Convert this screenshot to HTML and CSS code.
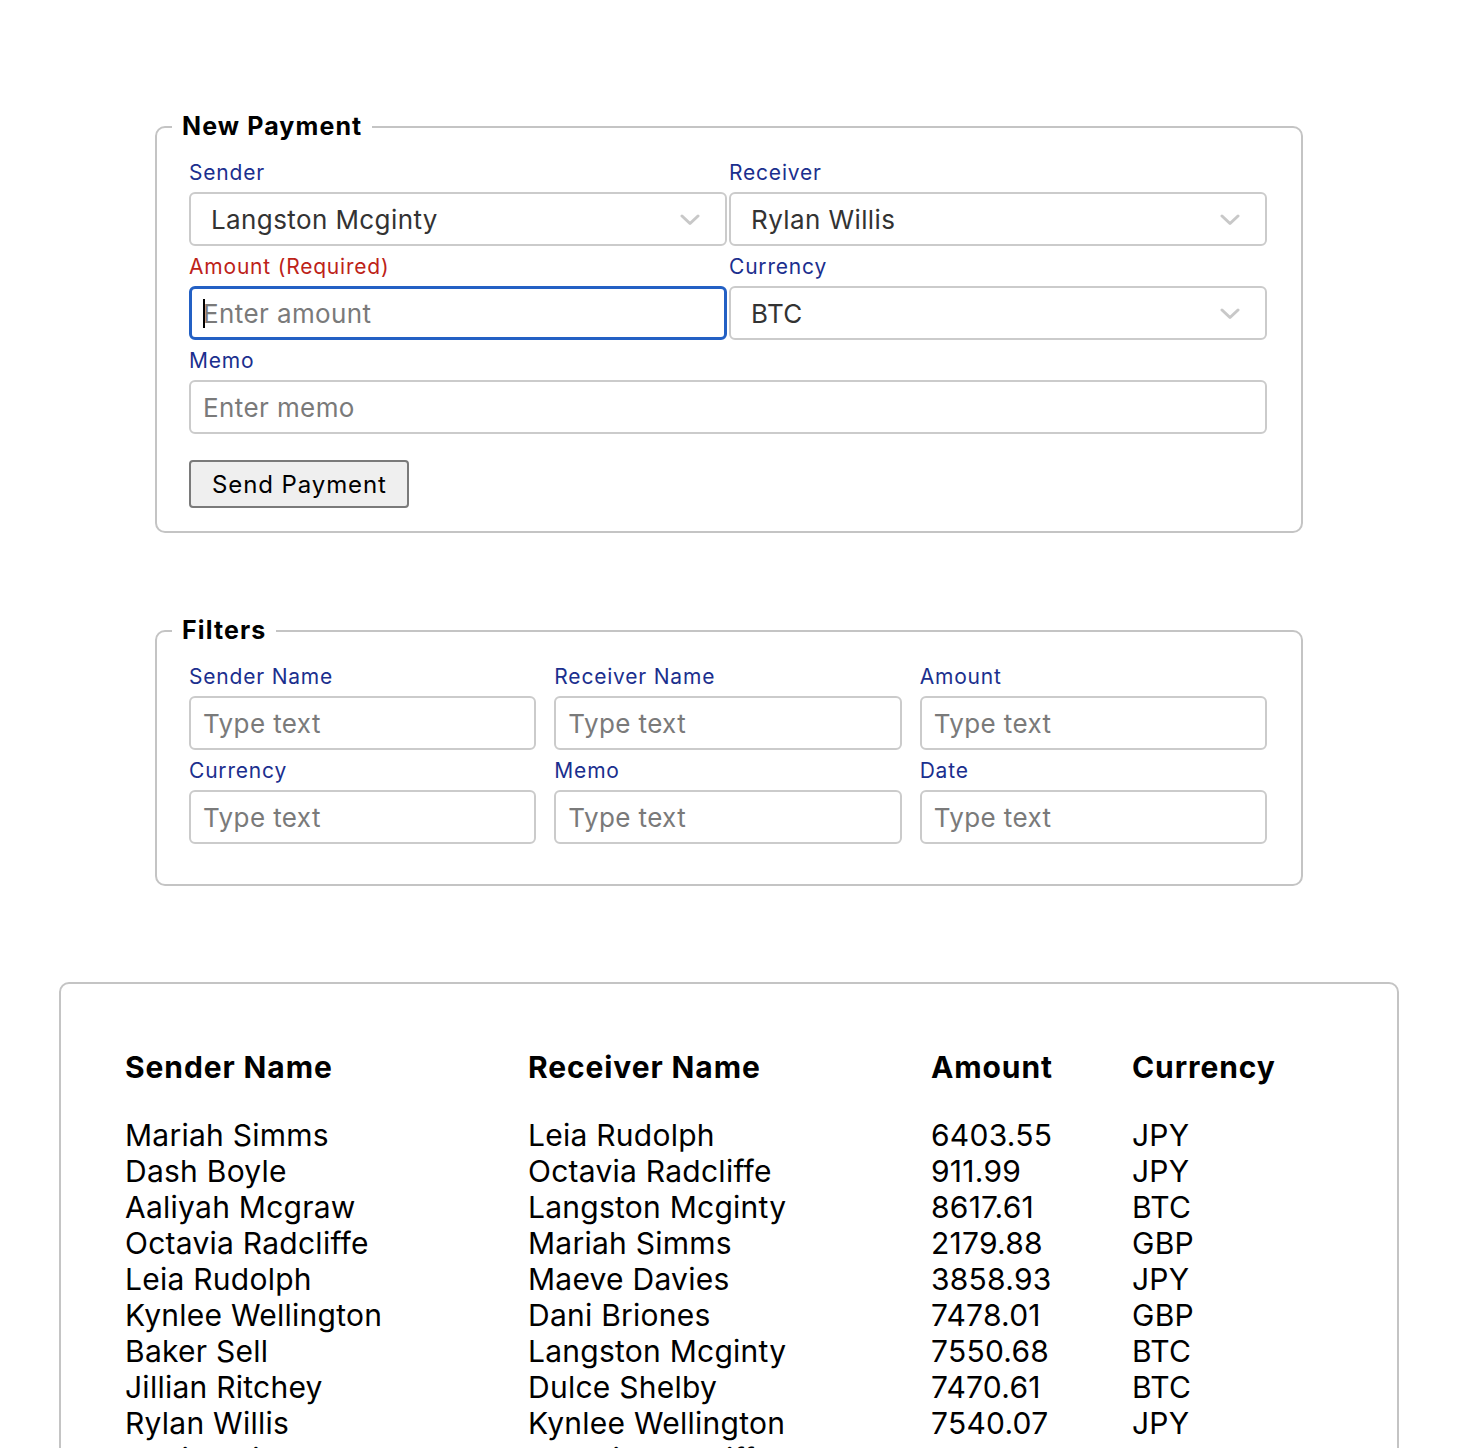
FILE: index.html
```html
<!DOCTYPE html>
<html lang="en">
<head>
<meta charset="utf-8">
<title>Payments</title>
<link rel="stylesheet" href="styles.css">
</head>
<body>
<main class="page">
  <fieldset class="panel panel-payment">
    <legend class="panel-title">New Payment</legend>
    <div class="grid grid-2">
      <div class="field">
        <label class="field-label">Sender</label>
        <div class="select-wrap">
          <select class="control select"><option>Langston Mcginty</option></select>
          <svg class="chevron" width="20" height="12" viewBox="0 0 20 12"><path d="M2 2 L10 9.5 L18 2" fill="none" stroke="#c8c8c8" stroke-width="3" stroke-linecap="round" stroke-linejoin="round"/></svg>
        </div>
      </div>
      <div class="field">
        <label class="field-label">Receiver</label>
        <div class="select-wrap">
          <select class="control select"><option>Rylan Willis</option></select>
          <svg class="chevron" width="20" height="12" viewBox="0 0 20 12"><path d="M2 2 L10 9.5 L18 2" fill="none" stroke="#c8c8c8" stroke-width="3" stroke-linecap="round" stroke-linejoin="round"/></svg>
        </div>
      </div>
      <div class="field">
        <label class="field-label field-label-error">Amount (Required)</label>
        <div class="input-wrap">
          <input class="control input input-focused" type="text" placeholder="Enter amount">
          <span class="caret"></span>
        </div>
      </div>
      <div class="field">
        <label class="field-label">Currency</label>
        <div class="select-wrap">
          <select class="control select"><option>BTC</option></select>
          <svg class="chevron" width="20" height="12" viewBox="0 0 20 12"><path d="M2 2 L10 9.5 L18 2" fill="none" stroke="#c8c8c8" stroke-width="3" stroke-linecap="round" stroke-linejoin="round"/></svg>
        </div>
      </div>
      <div class="field field-wide">
        <label class="field-label">Memo</label>
        <input class="control input" type="text" placeholder="Enter memo">
      </div>
    </div>
    <button class="btn" type="button">Send Payment</button>
  </fieldset>

  <fieldset class="panel panel-filters">
    <legend class="panel-title">Filters</legend>
    <div class="grid grid-3">
      <div class="field">
        <label class="field-label">Sender Name</label>
        <input class="control input" type="text" placeholder="Type text">
      </div>
      <div class="field">
        <label class="field-label">Receiver Name</label>
        <input class="control input" type="text" placeholder="Type text">
      </div>
      <div class="field">
        <label class="field-label">Amount</label>
        <input class="control input" type="text" placeholder="Type text">
      </div>
      <div class="field">
        <label class="field-label">Currency</label>
        <input class="control input" type="text" placeholder="Type text">
      </div>
      <div class="field">
        <label class="field-label">Memo</label>
        <input class="control input" type="text" placeholder="Type text">
      </div>
      <div class="field">
        <label class="field-label">Date</label>
        <input class="control input" type="text" placeholder="Type text">
      </div>
    </div>
  </fieldset>

  <section class="table-card">
    <table class="tx-table">
      <thead>
        <tr>
          <th class="col-wide">Sender Name</th>
          <th class="col-wide">Receiver Name</th>
          <th class="col-narrow">Amount</th>
          <th class="col-narrow">Currency</th>
        </tr>
      </thead>
      <tbody>
        <tr><td>Mariah Simms</td><td>Leia Rudolph</td><td>6403.55</td><td>JPY</td></tr>
        <tr><td>Dash Boyle</td><td>Octavia Radcliffe</td><td>911.99</td><td>JPY</td></tr>
        <tr><td>Aaliyah Mcgraw</td><td>Langston Mcginty</td><td>8617.61</td><td>BTC</td></tr>
        <tr><td>Octavia Radcliffe</td><td>Mariah Simms</td><td>2179.88</td><td>GBP</td></tr>
        <tr><td>Leia Rudolph</td><td>Maeve Davies</td><td>3858.93</td><td>JPY</td></tr>
        <tr><td>Kynlee Wellington</td><td>Dani Briones</td><td>7478.01</td><td>GBP</td></tr>
        <tr><td>Baker Sell</td><td>Langston Mcginty</td><td>7550.68</td><td>BTC</td></tr>
        <tr><td>Jillian Ritchey</td><td>Dulce Shelby</td><td>7470.61</td><td>BTC</td></tr>
        <tr><td>Rylan Willis</td><td>Kynlee Wellington</td><td>7540.07</td><td>JPY</td></tr>
        <tr><td>Mariah Simms</td><td>Octavia Radcliffe</td><td>7143.43</td><td>BTC</td></tr>
        <tr><td>Dani Briones</td><td>Baker Sell</td><td>1204.50</td><td>GBP</td></tr>
        <tr><td>Maeve Davies</td><td>Dash Boyle</td><td>3321.17</td><td>JPY</td></tr>
      </tbody>
    </table>
  </section>
</main>
</body>
</html>
```

FILE: styles.css
```css
* { box-sizing: border-box; }

html, body {
  margin: 0;
  padding: 0;
  background: #ffffff;
}

body {
  font-family: Inter, "Noto Sans", "Liberation Sans", sans-serif;
  color: #000;
  overflow: hidden;
}

.page {
  padding-top: 112px;
  display: flex;
  flex-direction: column;
  align-items: center;
}

.panel {
  width: 1148px;
  margin: 0;
  border: 2px solid #c4c4c4;
  border-radius: 10px;
  padding: 20px 34px 23px 32px;
  min-width: 0;
}

.panel-filters {
  margin-top: 83px;
  padding-bottom: 40px;
}

.panel-title {
  font-size: 25px;
  line-height: 29px;
  font-weight: 700;
  letter-spacing: 1.1px;
  padding: 0 10px;
  margin-left: -17px;
}

.grid {
  display: grid;
  row-gap: 9px;
}

.grid-2 {
  grid-template-columns: 1fr 1fr;
  column-gap: 2px;
}

.grid-3 {
  grid-template-columns: 1fr 1fr 1fr;
  column-gap: 18px;
}

.field {
  display: flex;
  flex-direction: column;
  min-width: 0;
}

.field-wide {
  grid-column: 1 / -1;
}

.field-label {
  font-size: 21px;
  line-height: 24px;
  letter-spacing: 0.8px;
  color: #1b2f8e;
  margin-bottom: 7px;
}

.field-label-error {
  color: #bd2218;
}

.control {
  width: 100%;
  height: 54px;
  font-family: inherit;
  font-size: 26px;
  letter-spacing: 0.4px;
  border: 2px solid #cbcbcb;
  border-radius: 6px;
  background: #fff;
  margin: 0;
  outline: none;
}

.input {
  padding: 0 12px;
  color: #333;
}

.input::placeholder {
  color: #7a7a7a;
  opacity: 1;
}

.input-focused {
  border: 3px solid #2360c4;
  padding: 0 11px;
}

.input-wrap {
  position: relative;
}

.caret {
  position: absolute;
  left: 14px;
  top: 13px;
  width: 2px;
  height: 29px;
  background: #000;
}

.select-wrap {
  position: relative;
}

.select {
  -webkit-appearance: none;
  appearance: none;
  padding: 0 50px 0 20px;
  color: #333;
}

.chevron {
  position: absolute;
  right: 27px;
  top: 22px;
  pointer-events: none;
}

.btn {
  margin-top: 26px;
  height: 48px;
  padding: 0 20px 0 21px;
  font-family: inherit;
  font-size: 24px;
  letter-spacing: 0.9px;
  color: #000;
  background: #efefef;
  border: 2px solid #7a7a7a;
  border-radius: 4px;
}

.table-card {
  margin-top: 96px;
  width: 1340px;
  border: 2px solid #c4c4c4;
  border-radius: 10px;
  padding: 65px 64px 40px 64px;
}

.tx-table {
  width: 1208px;
  border-collapse: collapse;
  table-layout: fixed;
  font-size: 30px;
  line-height: 36px;
}

.tx-table th {
  text-align: left;
  font-weight: 700;
  letter-spacing: 0.9px;
  padding: 0 0 32px 0;
}

.tx-table td {
  padding: 0;
  letter-spacing: 0.25px;
  white-space: nowrap;
}

.col-wide { width: 403px; }
.col-narrow { width: 201px; }
```
